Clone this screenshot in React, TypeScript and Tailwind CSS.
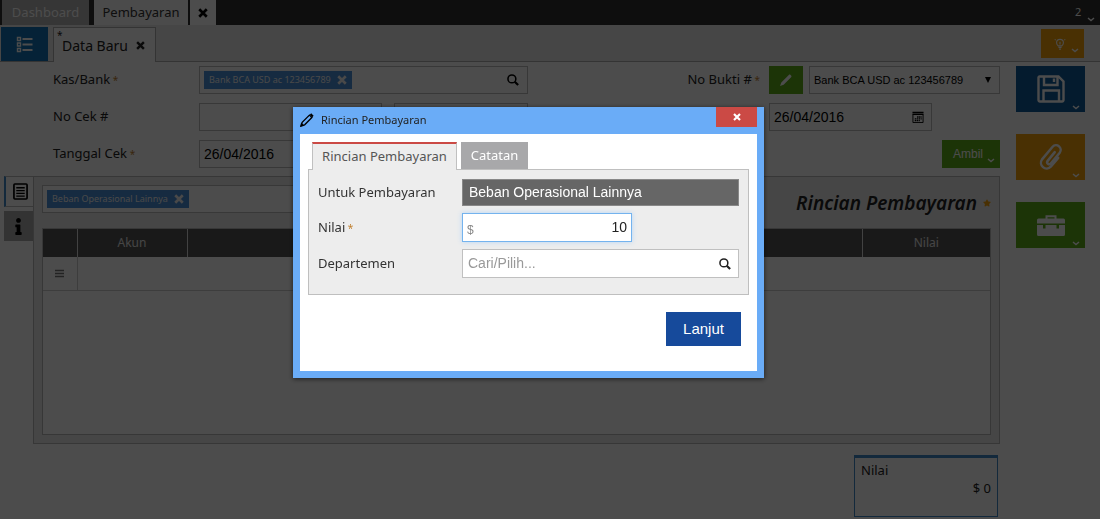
import { useState, type ReactNode } from "react";
import { FaInfo, FaStar } from "react-icons/fa";

type IconProps = { className?: string };

function CrossIcon({ className }: IconProps) {
  return (
    <svg className={className} viewBox="0 0 12 12" fill="none" stroke="currentColor" strokeWidth="3.2">
      <path d="M1.5 1.5l9 9M10.5 1.5l-9 9" />
    </svg>
  );
}

function SearchIcon({ className }: IconProps) {
  return (
    <svg className={className} viewBox="0 0 14 14" fill="none" stroke="currentColor">
      <circle cx="5.7" cy="5.7" r="4.6" strokeWidth="1.8" />
      <path d="M9 9l4 3.8" strokeWidth="2.6" />
    </svg>
  );
}

function PencilIcon({ className }: IconProps) {
  return (
    <svg className={className} viewBox="0 0 16 16" fill="none" stroke="currentColor" strokeWidth="1.5">
      <path d="M1.500 14.500l1-3.800L10.800 2.400l2.800 2.800-8.300 8.300z" />
      <path d="M12 1.200l2.800 2.800" strokeWidth="2.2" />
      <path d="M1 15l.7-2.600 1.900 1.900z" fill="currentColor" />
    </svg>
  );
}

function SolidPencilIcon({ className }: IconProps) {
  return (
    <svg className={className} viewBox="0 0 14 14" fill="currentColor">
      <path d="M1 13l1.300-3.600L9.800 1.900c.5-.5 1.200-.5 1.700 0l.6.6c.5.5.5 1.200 0 1.700L4.600 11.700z" />
    </svg>
  );
}

function Chevron({ className }: IconProps) {
  return (
    <svg className={className} viewBox="0 0 8 5" fill="none" stroke="currentColor" strokeWidth="1.4">
      <path d="M1 1l3 2.6L7 1" />
    </svg>
  );
}

function ListIcon({ className }: IconProps) {
  return (
    <svg className={className} viewBox="0 0 17 17" fill="none" stroke="currentColor">
      <path d="M1.500 1.500h3v3h-3zM1.500 7h3v3h-3zM1.500 12.500h3v3h-3z" strokeWidth="1.4" />
      <path d="M6.500 3h10M6.500 8.500h10M6.500 14h10" strokeWidth="2.2" />
    </svg>
  );
}

function PageIcon({ className }: IconProps) {
  return (
    <svg className={className} viewBox="0 0 16 18" fill="none" stroke="currentColor">
      <rect x="1" y="1" width="14" height="16" rx="1" strokeWidth="1.8" />
      <path d="M3.500 5h9M3.500 8h9M3.500 11h9M3.500 14h9" strokeWidth="1.4" />
    </svg>
  );
}

function CalendarIcon({ className }: IconProps) {
  return (
    <svg className={className} viewBox="0 0 13 13" fill="none" stroke="currentColor">
      <path d="M.5 1.500h12M.5 3.500h12" strokeWidth="1.6" />
      <path d="M1 4v8.500h11V4" />
      <path d="M5.500 6.500h5M3 8.500h7.500M3 10.500h5.500" strokeWidth="1.4" strokeDasharray="1.6 .6" />
    </svg>
  );
}

function BulbIcon({ className }: IconProps) {
  return (
    <svg className={className} viewBox="0 0 12 13" fill="none" stroke="currentColor" strokeWidth="1.2">
      <path d="M4 8.500C2.800 7.500 2.300 6.500 2.300 5.200a3.700 3.700 0 017.400 0c0 1.300-.5 2.300-1.700 3.300z" />
      <path d="M6 4v3M4.300 10.200h3.400M5 12h2M.3 1.500l1 .6M11.700 1.500l-1 .6" />
    </svg>
  );
}

function SaveIcon({ className }: IconProps) {
  return (
    <svg className={className} viewBox="0 0 28 28" fill="none" stroke="currentColor" strokeWidth="2.4">
      <path d="M2.500 1.500h19l5 5v18.500a1.500 1.500 0 01-1.500 1.500h-22a1.500 1.500 0 01-1.500-1.500V2.500a1 1 0 011-1z" />
      <path d="M7 2v8h13.500V2M6.500 26V15.500h15.500V26" />
      <path d="M17 3.500v3.500" />
    </svg>
  );
}

function ClipIcon({ className }: IconProps) {
  return (
    <svg className={className} viewBox="0 0 24 26" fill="none" stroke="currentColor" strokeWidth="2.3" strokeLinecap="round">
      <path d="M15.500 8.500l-6.800 8.300a1.900 1.900 0 002.900 2.400l8.500-10.200a4.300 4.300 0 00-6.600-5.500L3.700 15.200a5.300 5.300 0 008.100 6.800l6.900-8.200" />
    </svg>
  );
}

function ToolboxIcon({ className }: IconProps) {
  return (
    <svg className={className} viewBox="0 0 28 21">
      <path d="M9.500 4V1.200h9V4" fill="none" stroke="currentColor" strokeWidth="2" />
      <path
        fill="currentColor"
        d="M1.500 3.500h25a1.500 1.500 0 011.500 1.500v3.500H0V5a1.500 1.500 0 011.500-1.500zM0 10h6v3.500h2.500V10h11v3.500h2.500V10h6v9.500a1.500 1.500 0 01-1.500 1.500h-25A1.500 1.500 0 010 19.500z"
      />
    </svg>
  );
}

function Required() {
  return <span className="text-[10px] text-[#c08030]"> *</span>;
}

function Chip({ children }: { children: string }) {
  return (
    <span className="flex h-[18px] items-center gap-[6px] bg-[#4a90d9] px-[5px] text-[9px] text-[#f4f4f4]">
      {children}
      <button type="button" aria-label={"Hapus " + children}>
        <CrossIcon className="size-[10px]" />
      </button>
    </span>
  );
}

function SideButton({ label, className, children }: { label: string; className: string; children: ReactNode }) {
  return (
    <button type="button" aria-label={label} className={"relative flex h-[46px] items-center justify-center text-white " + className}>
      {children}
      <Chevron className="absolute right-[5px] bottom-[2px] w-2" />
    </button>
  );
}

const field = "h-7 border border-[#bbb] bg-white text-black";

function TopBar() {
  return (
    <header className="flex h-[25px] items-start bg-[#303030] pl-[2px] text-[13px]">
      <nav className="flex h-full flex-1">
        <a href="#dashboard" className="flex w-[87px] items-center justify-center bg-[#b4b4b4] text-white">
          Dashboard
        </a>
        <a href="#pembayaran" className="ml-[5px] flex w-[94px] items-center justify-center bg-[#fcfcfc] text-[#333]">
          Pembayaran
        </a>
        <button type="button" aria-label="Tutup Pembayaran" className="ml-[2px] flex w-[26px] items-center justify-center bg-white">
          <CrossIcon className="size-[10px]" />
        </button>
      </nav>
      <button type="button" className="relative h-full w-[32px] text-left text-[11px] text-white">
        <span className="pl-[7px]">2</span>
        <Chevron className="absolute right-[5px] bottom-[3px] w-2" />
      </button>
    </header>
  );
}

function SubTabs() {
  return (
    <div className="flex h-[37px] items-end border-b border-[#b0b0b0] bg-[#ececec] pl-px">
      <button type="button" aria-label="Daftar" className="flex h-[34px] w-[47px] items-center justify-center bg-[#1173b8] text-white">
        <ListIcon className="size-[17px]" />
      </button>
      <div className="relative -mb-px ml-[5px] flex h-[35px] w-[103px] items-center gap-2 border border-b-0 border-[#b0b0b0] bg-white pl-2 text-[14px] text-[#222]">
        <span className="absolute top-0 left-[3px] text-[10px]">*</span>
        Data Baru
        <button type="button" aria-label="Tutup Data Baru">
          <CrossIcon className="size-[9px]" />
        </button>
      </div>
      <button type="button" aria-label="Petunjuk" className="relative mr-4 mb-[3px] ml-auto flex h-[29px] w-[43px] items-center bg-[#f5a20a] pl-[13px] text-white">
        <BulbIcon className="size-[12px]" />
        <Chevron className="absolute right-[5px] bottom-[5px] w-2" />
      </button>
    </div>
  );
}

function PaymentForm() {
  return (
    <form className="flex justify-between pl-5 text-[13px] text-[#222]">
      <div className="grid grid-cols-[146px_329px] items-center gap-y-[9px]">
        <label htmlFor="kas">
          Kas/Bank
          <Required />
        </label>
        <div className={"flex items-center pr-2 pl-1 " + field}>
          <Chip>Bank BCA USD ac 123456789</Chip>
          <input id="kas" className="min-w-0 flex-1 outline-none" />
          <SearchIcon className="size-[12px]" />
        </div>

        <label htmlFor="cek">No Cek #</label>
        <div className="flex gap-3">
          <input id="cek" className={"w-[183px] " + field} />
          <input aria-label="No Cek lanjutan" className={"min-w-0 flex-1 " + field} />
        </div>

        <label htmlFor="tanggal">
          Tanggal Cek
          <Required />
        </label>
        <input
          id="tanggal"
          defaultValue="26/04/2016"
          className={"w-[162px] px-1 font-['Liberation_Sans',sans-serif] text-[14px] " + field}
        />
      </div>

      <div className="flex flex-col gap-[9px]">
        <div className="flex items-center">
          <label htmlFor="bukti" className="mr-[9px]">
            No Bukti #
            <Required />
          </label>
          <button type="button" aria-label="Ubah nomor" className="mr-[6px] flex h-7 w-[34px] items-center justify-center bg-[#5fae1a] text-white">
            <SolidPencilIcon className="size-[14px]" />
          </button>
          <div className="relative">
            <select
              id="bukti"
              className={"w-[191px] appearance-none pl-1 font-['Liberation_Sans',sans-serif] text-[11px] " + field}
            >
              <option>Bank BCA USD ac 123456789</option>
            </select>
            <svg className="pointer-events-none absolute top-[11px] right-[9px] w-[6px]" viewBox="0 0 6 6">
              <path d="M0 0h6L3 6z" />
            </svg>
          </div>
        </div>
        <div className="flex justify-end">
          <div className={"mr-[68px] flex w-[163px] items-center pr-[7px] pl-1 " + field}>
            <input
              aria-label="Tanggal"
              defaultValue="26/04/2016"
              className="min-w-0 flex-1 font-['Liberation_Sans',sans-serif] text-[14px] outline-none"
            />
            <CalendarIcon className="size-[12px]" />
          </div>
        </div>
        <button type="button" className="relative flex h-7 w-[58px] items-center self-end bg-[#5fae1a] pl-[11px] font-['Liberation_Sans',sans-serif] text-[12px] text-white">
          Ambil
          <Chevron className="absolute right-[5px] bottom-[5px] w-2" />
        </button>
      </div>
    </form>
  );
}

function DetailPanel() {
  return (
    <div className="mt-2 flex pl-1">
      <div className="flex w-[29px] flex-col gap-1">
        <button type="button" aria-label="Rincian" className="-mr-px flex h-[31px] items-center justify-center border-y border-l-2 border-[#bbb] border-l-[#428bca] bg-white">
          <PageIcon className="h-[17px] w-[15px]" />
        </button>
        <button type="button" aria-label="Info" className="flex h-[30px] items-center justify-center bg-[#aaa]">
          <FaInfo className="size-[17px]" />
        </button>
      </div>
      <section className="min-w-0 flex-1 border border-[#b8b8b8] bg-[#ececec] p-2">
        <div className="mb-[11px] flex items-start justify-between">
          <div className={"flex w-[330px] items-center pl-1 " + field}>
            <Chip>Beban Operasional Lainnya</Chip>
            <input aria-label="Cari akun" className="min-w-0 flex-1 outline-none" />
          </div>
          <h2 className="flex items-center gap-[6px] pt-1 text-[19px] leading-7 font-semibold text-[#222] italic">
            Rincian Pembayaran
            <FaStar className="size-[8px] text-[#f5a20a]" />
          </h2>
        </div>
        <div className="h-[207px] border border-[#b8b8b8] bg-white">
          <table className="w-full table-fixed border-collapse text-[12px]">
            <thead>
              <tr className="h-7 bg-[#555] text-[#e8e8e8]">
                <th className="w-[34px] border-r border-[#ddd]" aria-label="Urutan" />
                <th className="w-[110px] border-r border-[#ddd] font-normal">Akun</th>
                <th className="border-r border-[#ddd]" aria-label="Keterangan" />
                <th className="w-[128px] font-normal">Nilai</th>
              </tr>
            </thead>
            <tbody>
              <tr className="h-[33px] border-b border-[#ccc]">
                <td className="border-r border-[#ccc]">
                  <svg className="mx-auto size-[9px] text-[#777]" viewBox="0 0 9 9" stroke="currentColor" strokeWidth="1.3">
                    <path d="M0 1.500h9M0 4.500h9M0 7.500h9" />
                  </svg>
                </td>
                <td />
                <td />
                <td />
              </tr>
            </tbody>
          </table>
        </div>
      </section>
    </div>
  );
}

function PaymentDialog() {
  const [amount, setAmount] = useState("10");
  const row = "grid grid-cols-[144px_1fr] items-center";

  return (
    <div className="fixed inset-0 flex items-start justify-center bg-black/70 pt-[107px] pr-[43px]">
      <div role="dialog" aria-label="Rincian Pembayaran" className="w-[471px] bg-[#6aacf7] px-[7px] pb-[7px] shadow-[0_1px_5px_rgba(0,0,0,0.6)]">
        <div className="flex h-[27px] items-start text-[11px] text-[#222]">
          <PencilIcon className="mt-[6px] mr-[7px] size-[14px] text-black" />
          <h1 className="leading-[26px]">Rincian Pembayaran</h1>
          <button type="button" aria-label="Tutup" className="ml-auto flex h-[20px] w-[41px] items-center justify-center bg-[#cb4a45] text-white">
            <CrossIcon className="size-[8px]" />
          </button>
        </div>

        <div className="bg-white px-2 pt-2 pb-[25px]">
          <div role="tablist" className="flex gap-1 pl-1 text-[13px]">
            <button type="button" role="tab" aria-selected="true" className="relative -mb-px h-7 w-[145px] border-x border-t-2 border-[#c0c0c0] border-t-[#cb4a45] bg-[#ededed] text-[#555]">
              Rincian Pembayaran
            </button>
            <button type="button" role="tab" aria-selected="false" className="h-[27px] w-[67px] bg-[#a8a8aa] text-white">
              Catatan
            </button>
          </div>

          <div className="flex flex-col gap-[7px] border border-[#bfbfbf] bg-[#ededed] px-[9px] pt-[9px] pb-4 text-[13px] text-[#333]">
            <div className={row}>
              <span>Untuk Pembayaran</span>
              <span className="h-[27px] border border-[#888] bg-[#666] px-[6px] font-['Liberation_Sans',sans-serif] text-[14px] leading-[25px] text-white">
                Beban Operasional Lainnya
              </span>
            </div>
            <div className={row}>
              <label htmlFor="nilai">
                Nilai
                <Required />
              </label>
              <div className="flex h-[29px] w-[170px] items-center border border-[#74b3ee] bg-white px-1 font-['Liberation_Sans',sans-serif] shadow-[0_0_5px_#b5d6f5]">
                <span className="pt-1 text-[12px] text-[#888]">$</span>
                <input
                  id="nilai"
                  value={amount}
                  onChange={(e) => setAmount(e.target.value)}
                  className="min-w-0 flex-1 text-right text-[14px] text-[#222] outline-none"
                />
              </div>
            </div>
            <div className={row}>
              <label htmlFor="departemen">Departemen</label>
              <div className="flex h-[29px] items-center border border-[#c0c0c0] bg-white pr-[7px] pl-[5px]">
                <input
                  id="departemen"
                  placeholder="Cari/Pilih..."
                  className="min-w-0 flex-1 font-['Liberation_Sans',sans-serif] text-[14px] outline-none placeholder:text-[#999]"
                />
                <SearchIcon className="size-[12px] text-[#222]" />
              </div>
            </div>
          </div>

          <div className="mt-[17px] flex justify-end pr-2">
            <button type="button" className="h-[34px] w-[75px] bg-[#164a9b] font-['Liberation_Sans',sans-serif] text-[15px] text-white">
              Lanjut
            </button>
          </div>
        </div>
      </div>
    </div>
  );
}

export default function App() {
  return (
    <div className="min-h-screen bg-white font-['Noto_Sans',sans-serif]">
      <TopBar />
      <SubTabs />
      <main className="flex pr-[15px] pt-1">
        <div className="min-w-0 flex-1">
          <div className="pl-[33px]">
            <PaymentForm />
          </div>
          <DetailPanel />
          <div className="mt-[11px] mr-[2px] ml-auto h-[62px] w-[144px] border border-t-[3px] border-[#428bca] px-[6px] pt-[3px] text-[13px] leading-[18px] text-[#222]">
            <p>Nilai</p>
            <p className="text-right">$ 0</p>
          </div>
        </div>
        <aside className="ml-4 flex w-[69px] flex-col gap-[22px]">
          <SideButton label="Simpan" className="bg-[#0f5c9c]">
            <SaveIcon className="size-[28px]" />
          </SideButton>
          <SideButton label="Lampiran" className="bg-[#f5a20a]">
            <ClipIcon className="h-[28px] w-[26px]" />
          </SideButton>
          <SideButton label="Peralatan" className="bg-[#5fae1a]">
            <ToolboxIcon className="h-[21px] w-[28px]" />
          </SideButton>
        </aside>
      </main>
      <PaymentDialog />
    </div>
  );
}
